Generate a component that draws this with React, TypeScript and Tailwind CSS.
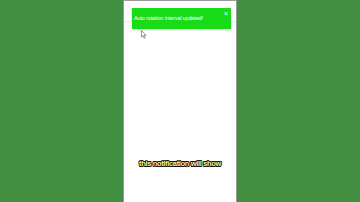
export default function App() {
  return (
    <div className="w-[360px] h-[202px] bg-[#438f42] flex justify-center overflow-hidden" style={{ fontFamily: '"Liberation Sans", Arial, sans-serif' }}>
      <div className="relative w-[114px] h-[202px] bg-white border-x border-t border-[#9a9a9a] flex flex-col">
        <div className="h-[21px] border-b border-[#eeeeee]" />
        <div className="absolute left-[8px] top-[7px] w-[99px] h-[21px] bg-[#19dc19] shadow-[0_1px_2px_rgba(0,0,0,0.2)] flex items-center pl-[2px]">
          <span className="text-white text-[5.4px] leading-none tracking-[-0.1px]">Auto rotation interval updated!</span>
          <span className="absolute right-[3px] top-[2px] text-white text-[7px] leading-none">×</span>
        </div>
        <svg className="absolute left-[17px] top-[29px]" width="6" height="9" viewBox="0 0 6 9">
          <path d="M0.5 0.5 L0.5 7 L2 5.6 L3.2 8.3 L4.2 7.9 L3 5.3 L5 5.3 Z" fill="white" stroke="#555" strokeWidth="0.6" />
        </svg>
        <div className="absolute left-0 right-0 top-[159px] flex justify-center">
          <span
            className="text-[7.5px] font-bold leading-none text-[#f7f3a0] tracking-[-0.35px]"
            style={{ textShadow: '-0.6px -0.6px 0 #111, 0.6px -0.6px 0 #111, -0.6px 0.6px 0 #111, 0.6px 0.6px 0 #111, 0 0.8px 0 #111, 0 -0.8px 0 #111, 0.8px 0 0 #111, -0.8px 0 0 #111' }}
          >
            this notification will show
          </span>
        </div>
      </div>
    </div>
  );
}
